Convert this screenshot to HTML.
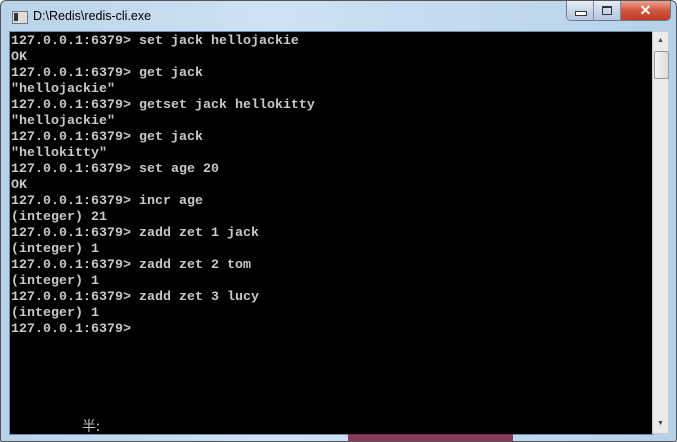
<!DOCTYPE html><html><head><style>
body{margin:0;width:677px;height:442px;overflow:hidden;background:#fff;font-family:"Liberation Sans",sans-serif}
.win{position:absolute;left:0;top:0;width:675px;height:440px;border:1px solid #555;border-radius:6px 6px 2px 2px;background:linear-gradient(90deg,#b9d3ea,#cfe2f3 40%,#c2d9ee 70%,#b7d1ea)}
.title{position:absolute;left:32px;top:8px;font-size:12.5px;color:#000}
.ico{position:absolute;left:11px;top:10px;width:14px;height:11px;background:#ddd;border:1px solid #777}
.ico:before{content:"";position:absolute;left:1px;top:1px;width:4px;height:8px;background:#333}
.btns{position:absolute;left:565px;top:0;width:103px;height:19px;border:1px solid #6b7c8f;border-top:none;border-radius:0 0 5px 5px;overflow:hidden;display:flex}
.b{height:19px;background:linear-gradient(#e7eef7,#c8d7e9 50%,#b6c8df);border-right:1px solid #7a8aa0;position:relative}
.c{flex:1;background:linear-gradient(#e9a595,#d2563f 50%,#c23a22);color:#fff;text-align:center;font-weight:bold;font-size:14px;line-height:19px}
.con{position:absolute;left:8px;top:30px;width:643px;height:402px;background:#000;border:1px solid #6f8fad}
pre{margin:0;position:absolute;left:1px;top:2px;font-family:"Liberation Mono",monospace;font-weight:bold;font-size:13.33px;line-height:16px;color:#c8c8c8}
.sb{position:absolute;left:651px;top:30px;width:17px;height:403px;background:#eaeaea;border:1px solid #ccc;box-sizing:border-box}
.th{position:absolute;left:1px;top:19px;width:13px;height:26px;border:1px solid #999;border-radius:2px;background:linear-gradient(90deg,#f4f4f4,#dcdcdc)}
</style></head><body>
<div class="win">
<div class="ico"></div><div class="title">D:\Redis\redis-cli.exe</div>
<div class="btns"><div class="b" style="width:26px"><div style="position:absolute;left:8px;top:10px;width:10px;height:3px;border:1px solid #333;background:#fff"></div></div><div class="b" style="width:26px"><div style="position:absolute;left:8px;top:5px;width:8px;height:6px;border:1px solid #333;border-top-width:2px"></div></div><div class="c">✕</div></div>
<div class="con"><pre>127.0.0.1:6379&gt; set jack hellojackie
OK
127.0.0.1:6379&gt; get jack
"hellojackie"
127.0.0.1:6379&gt; getset jack hellokitty
"hellojackie"
127.0.0.1:6379&gt; get jack
"hellokitty"
127.0.0.1:6379&gt; set age 20
OK
127.0.0.1:6379&gt; incr age
(integer) 21
127.0.0.1:6379&gt; zadd zet 1 jack
(integer) 1
127.0.0.1:6379&gt; zadd zet 2 tom
(integer) 1
127.0.0.1:6379&gt; zadd zet 3 lucy
(integer) 1
127.0.0.1:6379&gt;</pre>
<div style="position:absolute;left:72px;top:384px;color:#c0c0c0;font:14px 'Noto Sans CJK SC',sans-serif">半:</div></div>
<div class="sb"><div style="position:absolute;left:4px;top:5px;font-size:7px;color:#444">▲</div><div class="th"></div><div style="position:absolute;left:4px;top:388px;font-size:7px;color:#444">▼</div></div>
<div style="position:absolute;left:347px;top:433px;width:165px;height:7px;background:#7a2040;opacity:.85"></div>
</div>
</body></html>
